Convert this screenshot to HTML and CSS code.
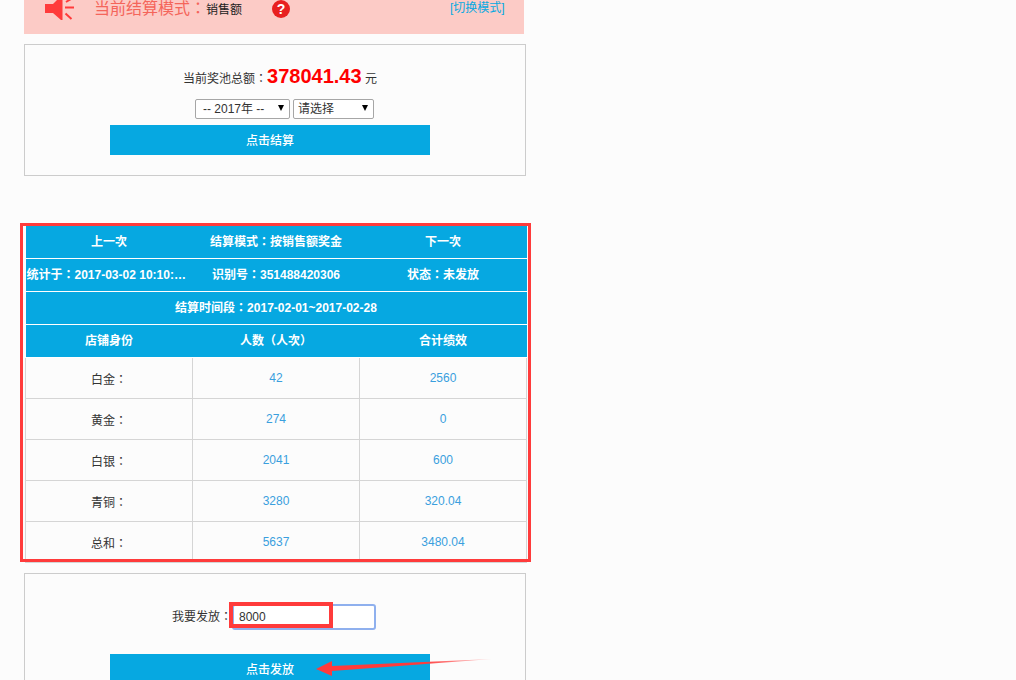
FILE: index.html
```html
<!DOCTYPE html>
<html>
<head>
<meta charset="utf-8">
<title>结算</title>
<link rel="stylesheet" href="styles.css">
</head>
<body>
<div class="page">
  <div class="banner">
    <svg class="speaker" width="32" height="22" viewBox="0 0 32 22"><path d="M1 4H9L17 -4H18.5V20H17L9 13H1z" fill="#ff3b3b"/><path d="M21 7.5h9M21.5 13.5l6 5.5M22 2l5-3" stroke="#ff3b3b" stroke-width="2" fill="none"/></svg>
    <span class="mode-label">当前结算模式：</span>
    <span class="mode-value">销售额</span>
    <span class="help">?</span>
    <a class="switch">[切换模式]</a>
  </div>

  <div class="box box-settle">
    <div class="pool">当前奖池总额：<b class="amount">378041.43</b> 元</div>
    <div class="selects">
      <span class="sel sel-year"><select><option>-- 2017年 --</option></select></span>
      <span class="sel sel-month"><select><option>请选择</option></select></span>
    </div>
    <div class="btn">点击结算</div>
  </div>

  <table class="stats">
    <colgroup><col class="c1"><col class="c2"><col class="c3"></colgroup>
    <tr class="head head-top"><td>上一次</td><td>结算模式：按销售额奖金</td><td>下一次</td></tr>
    <tr class="head"><td><div class="clip">统计于：2017-03-02 10:10:32</div></td><td>识别号：351488420306</td><td>状态：未发放</td></tr>
    <tr class="head"><td colspan="3">结算时间段：2017-02-01~2017-02-28</td></tr>
    <tr class="head"><td>店铺身份</td><td>人数（人次）</td><td>合计绩效</td></tr>
    <tr class="data"><td>白金：</td><td class="num">42</td><td class="num">2560</td></tr>
    <tr class="data"><td>黄金：</td><td class="num">274</td><td class="num">0</td></tr>
    <tr class="data"><td>白银：</td><td class="num">2041</td><td class="num">600</td></tr>
    <tr class="data"><td>青铜：</td><td class="num">3280</td><td class="num">320.04</td></tr>
    <tr class="data"><td>总和：</td><td class="num">5637</td><td class="num">3480.04</td></tr>
  </table>

  <div class="box box-pay">
    <div class="pay-row"><span class="pay-label">我要发放：</span><input class="pay-input" type="text" value="8000"></div>
    <div class="btn">点击发放</div>
  </div>
</div>

<div class="mark mark-table"></div>
<div class="mark mark-input"></div>
<svg class="mark-arrow" width="176" height="20" viewBox="0 0 176 20">
  <defs><linearGradient id="fade" x1="0" x2="1" y1="0" y2="0"><stop offset="0.6" stop-color="#ff3b3b"/><stop offset="1" stop-color="#ff3b3b" stop-opacity="0.2"/></linearGradient></defs>
  <path d="M0 12L16 4v5L176 2 16 14v5z" fill="url(#fade)"/>
</svg>
</body>
</html>
```
FILE: styles.css
```css
* { box-sizing: border-box; }
html, body { margin: 0; height: 100%; overflow: hidden; }
body {
  position: relative;
  background: #fcfcfc;
  color: #333;
  font: 12px/1.4 "Liberation Sans", "Noto Sans CJK TC", sans-serif;
}
.page { width: 502px; margin-left: 24px; }

.banner {
  display: flex;
  align-items: flex-start;
  width: 500px;
  height: 34px;
  background: #fccbc6;
  overflow: hidden;
}
.speaker { margin: 0 0 0 20px; flex: none; }
.mode-label { margin: -2px 0 0 18px; width: 112px; font-size: 16px; line-height: 22px; color: #f4655a; white-space: nowrap; }
.mode-value { margin-top: 0; width: 66px; line-height: 20px; color: #222; }
.help {
  width: 18px; height: 18px; margin-top: 0;
  border-radius: 50%;
  background: #e8201f;
  color: #fff;
  font: bold 14px/18px "Liberation Sans", sans-serif;
  text-align: center;
  flex: none;
}
.switch { margin: -2px 0 0 160px; line-height: 20px; color: #06a9e1; white-space: nowrap; }

.box { width: 502px; border: 1px solid #ccc; background: #fcfcfc; }
.box-settle { height: 132px; margin-top: 10px; padding-top: 15px; }
.pool { height: 36px; padding-left: 10px; line-height: 32px; text-align: center; }
.amount { font-size: 20px; color: #f00; }
.selects { display: flex; justify-content: center; gap: 3px; height: 29px; padding: 3px 0 0 19px; }
.sel { position: relative; display: block; height: 20px; }
.sel::after {
  content: "";
  position: absolute; top: 6px; right: 6px;
  border: 3.5px solid transparent;
  border-top: 6px solid #000;
  border-bottom: 0;
}
.sel-year { width: 95px; }
.sel-month { width: 81px; }
.sel select {
  appearance: none;
  width: 100%; height: 100%;
  padding: 0 0 0 4px;
  border: 1px solid #a6a6a6;
  border-radius: 2px;
  background: #fff;
  color: #333;
  font: 12px "Liberation Sans", "Noto Sans CJK TC", sans-serif;
}
.sel-year select { padding-left: 7px; }

.btn {
  width: 320px; height: 30px;
  margin-left: 85px;
  background: #06a8e1;
  color: #fff;
  font-weight: 500;
  line-height: 32px;
  text-align: center;
}

.stats {
  width: 501px;
  height: 337px;
  margin: 49px 0 10px 1px;
  border-collapse: collapse;
  table-layout: fixed;
  text-align: center;
}
.c1 { width: 167px; }
.c2 { width: 167px; }
.c3 { width: 167px; }
.stats td { padding: 0; }
.head td {
  height: 33px;
  padding-top: 1px;
  background: #06a8e1;
  color: #fff;
  font-weight: bold;
  border-bottom: 1px solid #fff;
}
.head-top td { padding-top: 3px; }
.clip { width: 166px; padding: 0 5px 0 1px; overflow: hidden; white-space: nowrap; text-overflow: ellipsis; text-align: left; }
.data td { height: 41px; border: 1px solid #d5d5d5; padding-top: 5px; }
.data .num { color: #3a9fde; padding-top: 1px; }

.box-pay { height: 140px; padding-top: 30px; }
.pay-row { display: flex; justify-content: center; align-items: center; height: 26px; padding-right: 2px; margin-bottom: 24px; }
.pay-label { padding-top: 2px; }
.pay-input {
  width: 144px; height: 26px;
  padding: 1px 5px 0;
  border: 2px solid #8fb0ee;
  border-radius: 3px;
  background: #fff;
  color: #333;
  font: 12px "Liberation Sans", sans-serif;
  outline: none;
}

.mark { position: absolute; pointer-events: none; }
.mark-table { left: 20px; top: 223px; width: 511px; height: 339px; border: 3px solid #ff3b3b; }
.mark-input { left: 229px; top: 602px; width: 104px; height: 26px; border: 4px solid #ff3b3b; }
.mark-arrow { position: absolute; left: 316px; top: 657px; }
```
